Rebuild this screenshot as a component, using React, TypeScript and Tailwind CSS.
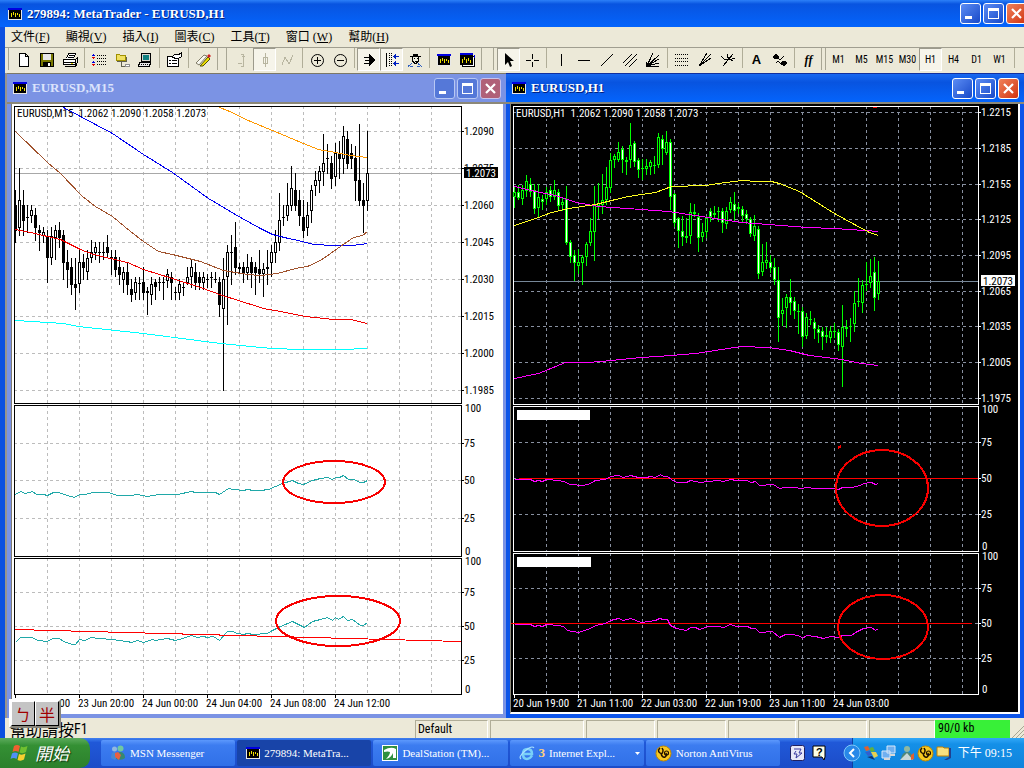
import { ReactNode } from "react";

// high, low, body top, body bottom, filled (1) or hollow (0)
type TCandle = [number, number, number, number, number];
type TPoint = [number, number];

const m15Candles: TCandle[] = [
    [270, 430, 315, 392, 1], [205, 407, 300, 383, 0], [270, 407, 315, 362, 1], [315, 398, 352, 352, 1], [315, 368, 330, 347, 0],
    [325, 423, 345, 384, 1], [375, 453, 390, 400, 1], [380, 430, 396, 407, 0], [390, 548, 407, 473, 1], [380, 495, 407, 473, 0],
    [375, 480, 390, 414, 0], [365, 443, 390, 413, 1], [390, 540, 405, 488, 1], [450, 563, 486, 510, 1], [473, 585, 502, 556, 1],
    [475, 630, 553, 563, 1], [450, 578, 486, 553, 0], [463, 540, 486, 504, 1], [450, 540, 473, 517, 0], [420, 488, 456, 473, 0],
    [426, 480, 441, 458, 0], [426, 488, 457, 457, 1], [426, 480, 457, 457, 1], [405, 475, 441, 459, 1], [450, 525, 471, 471, 1],
    [450, 530, 471, 510, 1], [471, 555, 501, 526, 1], [500, 578, 516, 540, 0], [490, 585, 516, 555, 1], [537, 607, 567, 584, 1],
    [530, 600, 546, 578, 0], [530, 600, 548, 548, 1], [500, 600, 546, 578, 1], [560, 645, 573, 578, 1], [530, 615, 553, 584, 0],
    [537, 600, 547, 562, 1], [530, 572, 547, 547, 1], [530, 600, 547, 547, 1], [507, 563, 522, 543, 0], [516, 600, 530, 549, 1],
    [560, 600, 577, 577, 1], [537, 600, 553, 578, 0], [545, 587, 562, 562, 1], [500, 555, 531, 548, 0], [480, 563, 501, 532, 0],
    [490, 570, 516, 548, 1], [516, 570, 531, 548, 1], [516, 570, 531, 548, 0], [522, 563, 538, 538, 1], [516, 563, 531, 531, 1],
    [516, 548, 538, 538, 1], [531, 650, 547, 614, 1], [475, 873, 538, 628, 0], [435, 675, 456, 532, 0], [405, 555, 457, 457, 1],
    [366, 525, 441, 504, 1], [490, 520, 501, 507, 0], [486, 548, 501, 518, 1], [463, 540, 501, 518, 0], [470, 563, 486, 518, 1],
    [486, 585, 501, 518, 1], [450, 548, 507, 522, 1], [490, 590, 507, 522, 0], [450, 555, 501, 508, 0], [435, 532, 456, 488, 0],
    [390, 488, 426, 458, 0], [280, 452, 360, 428, 0], [315, 378, 352, 352, 1], [250, 362, 315, 347, 0], [198, 332, 264, 318, 0],
    [218, 332, 270, 318, 1], [270, 378, 300, 347, 1], [300, 413, 351, 392, 1], [307, 407, 345, 383, 0], [255, 368, 270, 332, 0],
    [212, 287, 240, 257, 0], [198, 280, 213, 242, 0], [102, 258, 190, 215, 0], [132, 222, 175, 175, 1], [168, 267, 190, 236, 1],
    [130, 258, 158, 230, 0], [122, 236, 158, 177, 1], [78, 222, 108, 177, 0], [93, 207, 117, 192, 1], [132, 207, 160, 177, 1],
    [138, 303, 175, 242, 1], [72, 318, 240, 303, 1], [250, 400, 300, 318, 1], [93, 333, 219, 302, 0],
];

const h1Candles: TCandle[] = [
    [262, 323, 277, 292, 0], [255, 300, 277, 293, 1], [255, 315, 270, 298, 0], [226, 292, 243, 272, 0], [235, 292, 253, 277, 1],
    [253, 342, 270, 328, 1], [253, 350, 292, 323, 0], [285, 330, 297, 307, 1], [262, 315, 277, 298, 0], [258, 307, 270, 292, 1],
    [240, 300, 270, 290, 0], [268, 332, 277, 318, 1], [292, 332, 307, 314, 0], [258, 436, 297, 428, 1], [420, 488, 427, 470, 1],
    [450, 543, 466, 490, 1], [447, 522, 487, 497, 0], [466, 555, 472, 490, 0], [427, 497, 433, 470, 0], [355, 438, 393, 430, 0],
    [258, 482, 315, 395, 0], [250, 357, 308, 318, 0], [222, 342, 300, 314, 0], [200, 315, 262, 300, 0], [160, 280, 181, 265, 0],
    [163, 203, 169, 181, 0], [127, 187, 157, 180, 0], [138, 218, 148, 180, 1], [172, 225, 181, 185, 0], [69, 203, 136, 181, 0],
    [124, 200, 130, 185, 1], [175, 233, 181, 209, 1], [178, 240, 203, 203, 1], [178, 225, 199, 206, 0], [180, 225, 187, 200, 0],
    [168, 222, 195, 195, 1], [99, 203, 112, 194, 0], [105, 195, 118, 148, 1], [93, 165, 127, 160, 0], [118, 330, 127, 292, 1],
    [280, 380, 283, 368, 1], [350, 443, 355, 394, 1], [348, 438, 394, 412, 1], [355, 428, 409, 415, 0], [310, 432, 335, 407, 0],
    [312, 350, 337, 343, 0], [338, 456, 350, 415, 1], [370, 425, 397, 412, 0], [347, 413, 353, 395, 0], [325, 367, 334, 350, 1],
    [318, 358, 338, 346, 0], [320, 367, 333, 333, 1], [325, 398, 334, 368, 1], [320, 387, 332, 373, 0], [292, 340, 307, 330, 0],
    [277, 362, 313, 332, 1], [308, 343, 322, 328, 0], [317, 367, 328, 347, 1], [330, 372, 343, 358, 1], [350, 412, 358, 403, 1],
    [345, 423, 378, 407, 0], [378, 537, 387, 523, 1], [432, 527, 485, 517, 0], [427, 508, 481, 490, 0], [466, 520, 487, 503, 1],
    [473, 555, 502, 540, 1], [502, 725, 541, 653, 1], [595, 677, 630, 643, 0], [583, 683, 592, 625, 0], [537, 645, 592, 610, 1],
    [590, 657, 603, 632, 1], [613, 702, 632, 637, 0], [622, 742, 632, 710, 1], [640, 717, 652, 707, 0], [633, 675, 658, 658, 1],
    [655, 717, 667, 688, 1], [675, 730, 687, 700, 1], [680, 750, 693, 710, 1], [680, 728, 706, 710, 0], [678, 728, 693, 715, 0],
    [670, 713, 693, 697, 0], [687, 752, 697, 735, 1], [615, 860, 680, 740, 0], [660, 710, 680, 688, 1], [655, 725, 678, 678, 1],
    [573, 695, 610, 673, 0], [535, 620, 604, 604, 1], [540, 638, 555, 610, 0], [487, 573, 552, 552, 1], [477, 563, 528, 548, 0],
    [472, 633, 517, 593, 1], [483, 600, 543, 583, 0],
];

const m15Averages: { color: string; points: TPoint[] }[] = [
    { color: "#ff9800", points: [[219, 107], [227, 110], [250, 121], [272, 130], [303, 143], [318, 149], [335, 152], [350, 155], [367, 157]] },
    { color: "#0000f0", points: [[63, 107], [112, 133], [143, 154], [172, 172], [208, 198], [240, 217], [260, 228], [272, 234], [288, 238], [298, 240], [313, 244], [333, 245], [352, 245], [367, 243]] },
    { color: "#a0522d", points: [[15, 131], [47, 162], [60, 173], [82, 196], [95, 206], [112, 216], [130, 231], [143, 241], [158, 251], [172, 254], [200, 261], [223, 270], [247, 274], [260, 275], [277, 273], [295, 268], [307, 266], [320, 260], [340, 246], [353, 237], [362, 235], [367, 231]] },
    { color: "#f00000", points: [[15, 229], [30, 232], [60, 239], [80, 249], [93, 254], [127, 262], [143, 269], [172, 278], [200, 287], [222, 295], [238, 300], [263, 308], [280, 311], [305, 316], [333, 319], [350, 319], [367, 323]] },
    { color: "#00ffff", points: [[15, 320], [63, 323], [78, 326], [143, 333], [220, 343], [260, 347], [273, 348], [300, 349], [340, 349], [367, 348]] },
];

const h1Averages: { color: string; points: TPoint[] }[] = [
    { color: "#ff00ff", points: [[19, 257], [80, 272], [140, 285], [205, 305], [270, 317], [400, 327], [480, 332], [560, 346], [600, 352], [700, 367], [780, 373], [858, 377], [898, 381], [978, 384], [1068, 390], [1110, 394]] },
    { color: "#ff00ff", points: [[19, 835], [90, 818], [170, 786], [240, 786], [310, 779], [400, 770], [490, 764], [560, 758], [640, 748], [700, 737], [780, 740], [843, 751], [903, 765], [998, 777], [1058, 790], [1110, 796]] },
    { color: "#ffff20", points: [[19, 376], [90, 352], [130, 337], [180, 324], [260, 311], [310, 299], [360, 288], [400, 283], [440, 275], [490, 257], [590, 256], [630, 249], [700, 241], [750, 243], [788, 244], [813, 250], [873, 272], [978, 340], [1038, 373], [1083, 397], [1110, 406]] },
];

const m15Rsi: TPoint[] = [[46, 283], [60, 273], [75, 278], [95, 274], [108, 281], [130, 281], [142, 286], [160, 277], [175, 277], [200, 285], [222, 290], [238, 283], [255, 283], [275, 277], [325, 277], [350, 284], [390, 286], [410, 282], [440, 287], [475, 281], [505, 281], [530, 283], [573, 273], [585, 277], [645, 277], [658, 283], [683, 264], [700, 266], [730, 271], [742, 268], [760, 271], [780, 271], [803, 267], [845, 250], [875, 241], [895, 249], [910, 253], [937, 239], [960, 235], [982, 231], [995, 237], [1005, 232], [1018, 232], [1030, 226], [1045, 236], [1060, 236], [1080, 247], [1090, 247], [1101, 239]];
const m15Fast: TPoint[] = [[46, 725], [60, 712], [95, 712], [110, 719], [142, 722], [155, 714], [178, 714], [190, 722], [217, 731], [225, 731], [238, 718], [252, 721], [273, 711], [290, 713], [340, 716], [355, 720], [380, 722], [392, 727], [410, 720], [430, 725], [455, 717], [465, 720], [500, 715], [525, 721], [545, 715], [573, 706], [590, 712], [610, 709], [620, 712], [640, 709], [658, 721], [680, 694], [695, 694], [710, 700], [730, 703], [742, 700], [760, 703], [800, 700], [815, 691], [840, 677], [875, 664], [912, 681], [937, 664], [960, 658], [982, 652], [995, 660], [1005, 652], [1015, 656], [1030, 649], [1042, 660], [1055, 658], [1080, 676], [1090, 676], [1101, 666]];
const h1Rsi: TPoint[] = [[19, 238], [65, 238], [78, 242], [90, 239], [103, 242], [115, 238], [150, 240], [165, 243], [185, 253], [225, 254], [245, 248], [260, 239], [290, 237], [305, 229], [330, 226], [345, 230], [365, 226], [390, 232], [415, 232], [427, 229], [440, 232], [455, 223], [465, 227], [477, 227], [490, 238], [505, 245], [535, 247], [547, 241], [575, 247], [600, 244], [630, 240], [645, 243], [667, 238], [685, 241], [715, 241], [728, 246], [740, 244], [752, 256], [795, 253], [812, 265], [830, 260], [855, 260], [880, 265], [895, 262], [920, 265], [980, 265], [990, 268], [1003, 262], [1030, 262], [1055, 255], [1065, 250], [1088, 247], [1100, 253], [1110, 250]];
const h1Fast: TPoint[] = [[19, 673], [65, 673], [78, 679], [90, 675], [103, 677], [115, 673], [150, 675], [165, 678], [178, 689], [210, 695], [245, 683], [260, 674], [290, 670], [305, 660], [330, 655], [345, 659], [367, 655], [400, 665], [440, 661], [453, 653], [465, 658], [477, 656], [487, 675], [505, 683], [533, 689], [547, 680], [560, 680], [573, 688], [600, 679], [630, 677], [645, 682], [667, 673], [685, 677], [717, 679], [728, 685], [740, 684], [752, 697], [792, 694], [812, 710], [830, 703], [855, 703], [875, 708], [883, 713], [895, 706], [920, 709], [945, 713], [965, 709], [990, 711], [1003, 706], [1030, 706], [1040, 696], [1065, 685], [1088, 682], [1100, 691], [1110, 685]];

const range = (start: number, step: number, count: number) => Array.from({ length: count }, (_, i) => start + i * step);

// series are stored in thirds of a unit, shifted by the pane's origin
const toPoints = (points: TPoint[], dx = 0, dy = 0, k = 1) =>
    points.map(([x, y]) => `${dx + Math.round(x / k) + 0.5},${dy + Math.round(y / k) + 0.5}`).join(" ");

const Candles = ({ data, start, line, fill, empty }: { data: TCandle[]; start: number; line: string; fill: string; empty: string }) => (
    <g>
        {data.map(([high, low, top, bottom, filled], i) => {
            const x = start + i * 4;
            const y = (v: number) => 100 + Math.round(v / 3);
            return (
                <g key={i}>
                    <rect x={x} y={y(high)} width={1} height={y(low) - y(high)} fill={line} />
                    {y(bottom) - y(top) < 2 ? (
                        <rect x={x - 1} y={y(top)} width={3} height={1} fill={line} />
                    ) : (
                        <>
                            <rect x={x - 1} y={y(top)} width={3} height={y(bottom) - y(top)} fill={line} />
                            <rect x={x} y={y(top) + 1} width={1} height={Math.max(0, y(bottom) - y(top) - 2)} fill={filled ? fill : empty} />
                        </>
                    )}
                </g>
            );
        })}
    </g>
);

type TPane = { top: number; bottom: number; rows: { y: number; label: string }[]; ends?: boolean };

const Panes = ({ panes, left, right, columns, ink, grid }: { panes: TPane[]; left: number; right: number; columns: number[]; ink: string; grid: string }) => (
    <g>
        {panes.map((pane) => (
            <g key={pane.top}>
                {columns.map((x) => (
                    <line key={x} x1={x + 0.5} x2={x + 0.5} y1={pane.top} y2={pane.bottom} stroke={grid} strokeDasharray="3 3" />
                ))}
                {pane.rows.map(({ y, label }) => (
                    <g key={y}>
                        <line x1={left} x2={right} y1={y + 0.5} y2={y + 0.5} stroke={grid} strokeDasharray="3 3" />
                        <line x1={right} x2={right + 3} y1={y + 0.5} y2={y + 0.5} stroke={ink} />
                        <text x={right + 3} y={y + 4} fill={ink}>{label}</text>
                    </g>
                ))}
                {pane.ends && (
                    <>
                        <text x={right + 4} y={pane.top + 7} fill={ink}>100</text>
                        <text x={right + 4} y={pane.bottom - 1} fill={ink}>0</text>
                    </>
                )}
                <rect x={left + 0.5} y={pane.top + 0.5} width={right - left} height={pane.bottom - pane.top} fill="none" stroke={ink} />
            </g>
        ))}
    </g>
);

const TimeAxis = ({ start, labels, ink }: { start: number; labels: string[]; ink: string }) => (
    <g>
        {labels.map((label, i) => (
            <g key={label}>
                <line x1={start + i * 64 + 0.5} x2={start + i * 64 + 0.5} y1={694} y2={698} stroke={ink} />
                <text x={start + i * 64 - 1} y={707} fill={ink}>{label}</text>
            </g>
        ))}
    </g>
);

const chartText = "block w-full h-auto font-['Roboto_Condensed','Liberation_Sans_Narrow',sans-serif] text-[11px]";

const M15Chart = () => (
    <svg className={chartText} viewBox="12 104 491 610" shapeRendering="crispEdges" role="img" aria-label="EURUSD,M15">
        <rect x={12} y={104} width={491} height={610} fill="#ffffff" />
        <Panes
            left={14} right={461} ink="#000000" grid="#bcbcbc" columns={range(47, 32, 13)}
            panes={[
                { top: 106, bottom: 403, rows: [131, 168, 205, 242, 279, 316, 353, 390].map((y, i) => ({ y, label: (1.209 - i * 0.0015).toFixed(4) })) },
                { top: 405, bottom: 556, ends: true, rows: [{ y: 443, label: "75" }, { y: 480, label: "50" }, { y: 518, label: "25" }] },
                { top: 558, bottom: 694, ends: true, rows: [{ y: 592, label: "75" }, { y: 626, label: "50" }, { y: 660, label: "25" }] },
            ]}
        />
        <line x1={15} x2={461} y1={173.5} y2={173.5} stroke="#a8a8a8" />
        <Candles data={m15Candles} start={15} line="#000000" fill="#000000" empty="#ffffff" />
        {m15Averages.map((line) => (
            <polyline key={line.color} points={toPoints(line.points)} fill="none" stroke={line.color} />
        ))}
        <polyline points={toPoints(m15Rsi, 0, 400, 3)} fill="none" stroke="#20a8a8" />
        <polyline points={toPoints(m15Fast, 0, 400, 3)} fill="none" stroke="#20a8a8" />
        <line x1={15} x2={461} y1={629.5} y2={641.5} stroke="#ff0000" />
        <g fill="none" stroke="#f80000" strokeWidth={2}>
            <ellipse cx={334} cy={482} rx={51} ry={21} />
            <ellipse cx={338} cy={621} rx={62} ry={25} />
        </g>
        <rect x={464} y={167} width={34} height={11} fill="#000000" />
        <text x={466} y={177} fill="#ffffff">1.2073</text>
        <text x={17} y={117} className="whitespace-pre">{"EURUSD,M15  1.2062 1.2090 1.2058 1.2073"}</text>
        <TimeAxis start={15} ink="#000000" labels={["23 Jun 16:00", "23 Jun 20:00", "24 Jun 00:00", "24 Jun 04:00", "24 Jun 08:00", "24 Jun 12:00"]} />
    </svg>
);

const H1Chart = () => (
    <svg className={chartText} viewBox="511 104 507 608" shapeRendering="crispEdges" role="img" aria-label="EURUSD,H1">
        <rect x={511} y={104} width={507} height={608} fill="#000000" />
        <Panes
            left={513} right={978} ink="#ffffff" grid="#8890a0" columns={range(546, 32, 14)}
            panes={[
                { top: 106, bottom: 404, rows: [112, 148, 184, 219, 255, 291, 326, 362, 398].map((y, i) => ({ y, label: (1.2215 - i * 0.003).toFixed(4) })) },
                { top: 406, bottom: 551, ends: true, rows: [{ y: 442, label: "75" }, { y: 478, label: "50" }, { y: 514, label: "25" }] },
                { top: 553, bottom: 694, ends: true, rows: [{ y: 588, label: "75" }, { y: 623, label: "50" }, { y: 658, label: "25" }] },
            ]}
        />
        <line x1={514} x2={978} y1={281.5} y2={281.5} stroke="#778899" />
        <Candles data={h1Candles} start={514} line="#00ff00" fill="#ffffff" empty="#000000" />
        {h1Averages.map((line, i) => (
            <polyline key={i} points={toPoints(line.points, 508, 100, 3)} fill="none" stroke={line.color} />
        ))}
        <rect x={519} y={478} width={459} height={1} fill="#ff0000" />
        <rect x={511} y={623} width={461} height={1} fill="#ff0000" />
        <polyline points={toPoints(h1Rsi, 508, 400, 3)} fill="none" stroke="#ff00ff" />
        <polyline points={toPoints(h1Fast, 508, 400, 3)} fill="none" stroke="#ff00ff" />
        <path d="M838 448l3-2" stroke="#f80000" strokeWidth={2} />
        <path d="M873 107.500h4" stroke="#f80000" />
        <g fill="none" stroke="#f80000" strokeWidth={2}>
            <ellipse cx={882} cy={488} rx={46} ry={38} />
            <ellipse cx={883} cy={627} rx={45} ry={32} />
        </g>
        <rect x={517} y={410} width={73} height={10} fill="#ffffff" />
        <rect x={517} y={557} width={74} height={10} fill="#ffffff" />
        <rect x={981} y={275} width={34} height={11} fill="#ffffff" />
        <text x={983} y={285} fill="#000000">1.2073</text>
        <rect x={516} y={108} width={184} height={11} fill="#000000" />
        <text x={516} y={117} fill="#ffffff" className="whitespace-pre">{"EURUSD,H1  1.2062 1.2090 1.2058 1.2073"}</text>
        <TimeAxis start={514} ink="#ffffff" labels={["20 Jun 19:00", "21 Jun 11:00", "22 Jun 03:00", "22 Jun 19:00", "23 Jun 11:00", "24 Jun 03:00"]} />
    </svg>
);

const AppIcon = () => (
    <svg width="14" height="12" viewBox="0 0 14 12" shapeRendering="crispEdges" className="shrink-0">
        <path d="M0 0h14v12H0z" fill="#e8e8e8" />
        <path d="M0 0h14v2H0z" fill="#0000e0" />
        <path d="M1 2h12v9H1z" fill="#000" />
        <path d="M3 5h1v4H3zM5 4h1v3H5zM7 5h1v4H7zM9 5h1v2H9zM11 6h1v3h-1z" fill="#f0e000" />
    </svg>
);

const WindowButtons = ({ inactive }: { inactive?: boolean }) => {
    const blue = inactive
        ? "h-[21px] w-[21px] rounded-[3px] border border-[#b8c8f4] bg-[#5578d8]"
        : "h-[21px] w-[21px] rounded-[3px] border border-white bg-linear-to-br from-[#5c8cf4] to-[#1848c8]";
    const red = inactive
        ? "h-[21px] w-[21px] rounded-[3px] border border-[#c8c4ec] bg-[#b06078]"
        : "h-[21px] w-[21px] rounded-[3px] border border-white bg-linear-to-br from-[#f08058] to-[#d03008]";
    return (
        <div className="flex shrink-0 gap-[2px]">
            <button type="button" aria-label="Minimize" className={blue}>
                <svg viewBox="0 0 19 19" shapeRendering="crispEdges"><path d="M4 12h7v3H4z" fill="#fff" /></svg>
            </button>
            <button type="button" aria-label="Maximize" className={blue}>
                <svg viewBox="0 0 19 19" shapeRendering="crispEdges"><path d="M4 4h11v11H4zM5 7v7h9V7z" fill="#fff" fillRule="evenodd" /></svg>
            </button>
            <button type="button" aria-label="Close" className={red}>
                <svg viewBox="0 0 19 19"><path d="M5 5l9 9M14 5l-9 9" stroke="#fff" strokeWidth="2.2" /></svg>
            </button>
        </div>
    );
};

const Tool = ({ label, pressed, children }: { label: string; pressed?: boolean; children: ReactNode }) => (
    <button
        type="button"
        aria-label={label}
        className={`flex h-[23px] w-[23px] shrink-0 items-center justify-center ${pressed ? "border border-t-[#9c9a8c] border-l-[#9c9a8c] border-r-white border-b-white bg-[#f6f4ea]" : ""}`}
    >
        {children}
    </button>
);

const Ico = ({ children, color = "#000" }: { children: ReactNode; color?: string }) => (
    <svg width="16" height="16" viewBox="0 0 16 16" fill="none" stroke={color} shapeRendering="crispEdges" className="shrink-0">{children}</svg>
);

const Sep = () => (
    <div className="flex w-[6px] shrink-0 justify-center"><div className="h-5 w-px bg-[#b0ad98]" /></div>
);

const Grip = ({ className }: { className: string }) => (
    <div className={`flex h-[22px] shrink-0 justify-between ${className}`}>
        <div className="w-px bg-[#a8a694]" />
        <div className="w-px bg-[#a8a694]" />
    </div>
);

const menu = [["文件", "F"], ["顯視", "V"], ["插入", "I"], ["圖表", "C"], ["工具", "T"], ["窗口 ", "W"], ["幫助", "H"]];
const periods = ["M1", "M5", "M15", "M30", "H1", "H4", "D1", "W1"];

const Toolbar = () => (
    <div className="flex h-[26px] items-start overflow-hidden border-t border-[#a09e90] pl-[3px]">
        <div className="mr-[3px] h-[22px] w-px shrink-0 bg-[#a8a694]" />
        <Tool label="New"><Ico><path d="M3.500 1.500h6l3 3v10h-9zM9.500 1.500v3h3" fill="#fff" /></Ico></Tool>
        <Tool label="Save"><Ico><path d="M1.500 1.500h13v13h-13z" fill="#787800" /><path d="M4 2h8v6H4z" fill="#e8e8e8" stroke="none" /><path d="M4 10h8v5H4z" fill="#000" stroke="none" /><path d="M9 11h2v3H9z" fill="#fff" stroke="none" /></Ico></Tool>
        <Tool label="Print"><Ico><path d="M4.500 6.500l2-5h7l-2 5M1.500 7.500h12v5h-12z" fill="#fff" /><path d="M13.500 7.500l2-2v5l-2 2M3 14.500h10l2-2M7 3.500h5M6 5.500h5M2 10.500h11" /><path d="M9 11h2v1H9z" fill="#e0d000" stroke="none" /></Ico></Tool>
        <Sep />
        <Tool label="Market watch"><Ico><path d="M6 3.500h10M6 6.500h10M6 9.500h10M6 12.500h10" strokeDasharray="1 1" /><g stroke="none"><path d="M2 2h1v1h1v1H1V3h1zM2 9h1v1h1v1H1v-1h1z" fill="#00d" /><path d="M1 5h3v1H3v1H2V6H1zM1 12h3v1H3v1H2v-1H1z" fill="#d00" /></g></Ico></Tool>
        <Tool label="Navigator"><Ico><path d="M2.500 2.500h3l1 1h5v5h-9z" fill="#f0e060" stroke="#a09000" /><path d="M3 9.500h9v-5M7.500 10v4h4" stroke="#606050" /><path d="M11 12h4v2h-4z" fill="#fff" stroke="#909090" /></Ico></Tool>
        <Tool label="Terminal"><Ico><path d="M4.500 1.500h9v8h-9z" fill="#d8d8d0" /><path d="M6 3h6v5H6z" fill="#108080" stroke="none" /><path d="M2.500 10.500h11l-1 4h-11z" fill="#e8e8e8" /><path d="M4 12.500h8" strokeDasharray="1 1" /></Ico></Tool>
        <Sep />
        <Tool label="Properties"><Ico><path d="M1.500 4.500h11v10h-11z" fill="#fff" /><path d="M3 8.500h2M6 8.500h5M3 11.500h2M6 11.500h5" /><path d="M6 5l3-3 3 1 3-2v4l-4 2z" fill="#fff" /></Ico></Tool>
        <Sep />
        <Tool label="Ruler"><Ico><g shapeRendering="auto"><path d="M1 11l8-8 3 1-8 9z" fill="#f8f8f0" stroke="#807c68" /><path d="M5 14l8-9 2 2-7 7z" fill="#f0e000" stroke="#505000" /><path d="M12 4l2-2 2 2-2 2z" fill="#d02020" stroke="none" /></g></Ico></Tool>
        <Grip className="mx-[3px] w-[10px]" />
        <Tool label="Bar chart"><Ico color="#b8b5a0"><path d="M7 2h2v12H7M4 11.500h4M8 4.500h3" /></Ico></Tool>
        <Tool label="Candlesticks" pressed><Ico color="#b8b5a0"><path d="M8.500 1v14M6.500 5.500h4v6h-4z" /></Ico></Tool>
        <Tool label="Line chart"><Ico color="#b8b5a0"><path d="M2 13l3-8 4 7 4-9" /></Ico></Tool>
        <Sep />
        <Tool label="Zoom in"><Ico><g shapeRendering="auto"><circle cx="8.500" cy="8.500" r="6" /></g><path d="M5 8.500h7M8.500 5v7" /></Ico></Tool>
        <Tool label="Zoom out"><Ico><g shapeRendering="auto"><circle cx="8.500" cy="8.500" r="6" /></g><path d="M5 8.500h7" /></Ico></Tool>
        <Sep />
        <Tool label="Auto scroll" pressed><Ico><path d="M8 2l6 6-6 6z" fill="#000" /><path d="M3 5.500h5M4 8.500h5M3 11.500h5" /></Ico></Tool>
        <Tool label="Chart shift" pressed><Ico><path d="M2.500 1v14" /><path d="M5.500 1v14M7.500 1v14" strokeDasharray="1 1" /><path d="M10 4.500h5M10 11.500h5" stroke="#0020c0" /><path d="M9 4.500l3-3v6zM9 11.500l3-3v6z" fill="#0020c0" stroke="none" /></Ico></Tool>
        <Tool label="Expert"><Ico><path d="M5 4h6v7H5z" fill="#f0f0e0" stroke="none" /><path d="M3 4.500h11" /><path d="M6 2h5v2H6z" fill="#000" stroke="none" /><path d="M5.500 5v4l2 2h2l2-2V5M7 6.500h1M10 6.500h1M8 9.500h2" /><path d="M1 14.500l4-3M15 14.500l-4-3M3 14.500h3M10 14.500h3" stroke="#3060c0" /></Ico></Tool>
        <Sep />
        <Tool label="New chart"><AppIcon /></Tool>
        <Tool label="Charts"><Ico><path d="M3.500 4.500h12v10h-12z" fill="#fff" /><path d="M15 3h1v3h-1z" fill="#00d" stroke="none" /><path d="M1 2h13v11H1z" fill="#000" stroke="none" /><path d="M1 1h13v2H1z" fill="#00d" stroke="none" /><path d="M3.500 7v4M5.500 5v3M7.500 7v4M9.500 6v3M11.500 8v3" stroke="#f0e000" /></Ico></Tool>
        <Grip className="mx-[3px] w-[13px]" />
        <Tool label="Cursor" pressed><Ico><g shapeRendering="auto"><path d="M4 1v12l3-3 2 5 2-1-2-5h4z" fill="#000" stroke="none" /></g></Ico></Tool>
        <Tool label="Crosshair"><Ico><path d="M2 8.500h5M10 8.500h5M8.500 2v5M8.500 10v5" /></Ico></Tool>
        <Sep />
        <Tool label="Vertical line"><Ico><path d="M8.500 2v12" /></Ico></Tool>
        <Tool label="Horizontal line"><Ico><path d="M2 8.500h12" /></Ico></Tool>
        <Tool label="Trend line"><Ico><path d="M2 14L14 2" /></Ico></Tool>
        <Tool label="Channel"><Ico><path d="M1 11l9-9M3 14L15 2M7 15l8-8" /></Ico></Tool>
        <Tool label="Fan"><Ico><path d="M2 14L8 1M2 14L14 3M2 14l12-7M2 14l12-3M2 14h12" /><path d="M1 15v-5l5 5z" fill="#000" stroke="none" /></Ico></Tool>
        <Sep />
        <Tool label="Fibonacci"><Ico><path d="M1 2.500h14M1 6.500h14M1 9.500h14M1 13.500h14" strokeDasharray="1 1" /></Ico></Tool>
        <Tool label="Fibonacci fan"><Ico><path d="M2 14L10 1M2 14L14 2M2 14l12-8" /></Ico></Tool>
        <Tool label="Fibonacci arcs"><Ico><path d="M3 14L13 2M1 4q3 4 6 4t8-2M7 2q0 5 6 7" /></Ico></Tool>
        <Sep />
        <Tool label="Text"><span className="font-['Liberation_Sans'] text-[13px] font-bold">A</span></Tool>
        <Tool label="Arrows"><Ico><path d="M1 5l3-3 3 3-3 2zM9 11l3-2 3 2-3 3z" fill="#000" /><path d="M6 6l2 2 4-4M4 11l2-2 4 4" /></Ico></Tool>
        <Sep />
        <Tool label="Indicators"><span className="font-['Liberation_Serif'] text-[12px] font-bold italic">ff</span></Tool>
        <Grip className="mx-px w-[5px]" />
        {periods.map((period) => (
            <Tool key={period} label={period} pressed={period === "H1"}>
                <span className="font-['Roboto_Condensed','Liberation_Sans_Narrow',sans-serif] text-[10px]">{period}</span>
            </Tool>
        ))}
        <Sep />
    </div>
);

const WindowsFlag = () => (
    <svg width="20" height="18" viewBox="0 0 20 18" className="shrink-0">
        <path d="M4 2q3-2 6 0L8.500 8q-3-2-6 0z" fill="#f06030" />
        <path d="M11 2.500q3 1.500 6.500-.5L16 8q-3 2-6.500.500z" fill="#70c030" />
        <path d="M2 9.500q3-2 6 0L6.500 15q-3-2-6 0z" fill="#5090f8" />
        <path d="M9 10q3 1.500 6.500-.5L14 15.500q-3 2-6.500.5z" fill="#f8d030" />
    </svg>
);

const MsnIcon = () => (
    <svg width="16" height="16" viewBox="0 0 16 16" className="shrink-0">
        <circle cx="4.500" cy="4" r="2.500" fill="#90b8e0" /><path d="M1 13q0-7 4-6l3 4-3 4z" fill="#4888d0" />
        <circle cx="10.500" cy="3.500" r="3" fill="#70c8a0" /><path d="M6 14q1-8 5-7 4 1 4 6-3 3-9 1z" fill="#388870" />
        <path d="M5 8l3-1 3 3-2 5-4-3z" fill="#e86040" />
    </svg>
);

const DealIcon = () => (
    <svg width="16" height="16" viewBox="0 0 16 16" className="shrink-0">
        <path d="M0 0h16v16H0z" fill="#fff" />
        <path d="M1 1h14v14H1z" fill="#309040" />
        <path d="M2 5q7-4 12-1v9h-3V8q-2 5-7 6 4-4 4-7-2-1-6 0z" fill="#fff" />
    </svg>
);

const ExplorerIcon = () => (
    <svg width="16" height="16" viewBox="0 0 16 16" fill="none" className="shrink-0">
        <path d="M13 10.500q-2 3.500-5 3.500-4 0-4-5 0-5 4.500-5T13 9H5" stroke="#78d0f8" strokeWidth="2.500" />
        <path d="M2 14q-3-2 4-8t9-3" stroke="#a8e0ff" strokeWidth="1.200" />
    </svg>
);

const NortonIcon = () => (
    <svg width="17" height="17" viewBox="0 0 17 17" fill="none" className="shrink-0">
        <circle cx="8.500" cy="8.500" r="7.500" fill="#f8c820" stroke="#c08800" />
        <path d="M5 3q-3 3 0 5t3-3L7 3M6 8q1 5 4 4 2-1 1-4" stroke="#201000" strokeWidth="1.500" />
        <circle cx="11.500" cy="8" r="2" stroke="#201000" strokeWidth="1.200" />
    </svg>
);

const tasks = [
    { icon: <MsnIcon />, label: "MSN Messenger" },
    { icon: <AppIcon />, label: "279894: MetaTra...", active: true },
    { icon: <DealIcon />, label: "DealStation (TM)..." },
    { icon: <ExplorerIcon />, label: "Internet Expl...", count: "3" },
    { icon: <NortonIcon />, label: "Norton AntiVirus" },
];

const Taskbar = () => (
    <footer className="flex h-[30px] bg-linear-to-b from-[#4080f0] via-[#2058d8] via-15% to-[#1c4cc8] font-['Liberation_Serif','Noto_Sans_CJK_TC',serif] text-[11px] text-white">
        <button type="button" className="mr-[11px] flex w-[90px] shrink-0 items-center gap-[5px] rounded-r-[10px] bg-linear-to-b from-[#5cac5c] via-[#349034] via-25% to-[#2c802c] pl-[10px]">
            <WindowsFlag />
            <span className="font-['Noto_Sans_CJK_TC',sans-serif] text-[17px] leading-5 italic [text-shadow:1px_1px_1px_#103810]">開始</span>
        </button>
        <nav className="flex min-w-0 flex-1 gap-[2px] py-[2px]">
            {tasks.map((task) => (
                <button
                    key={task.label}
                    type="button"
                    className={`flex min-w-0 flex-1 items-center gap-[4px] overflow-hidden rounded-[2px] pl-[9px] whitespace-nowrap ${task.active ? "bg-[#1844a8]" : "bg-linear-to-b from-[#5c98fc] via-[#3c7cf0] via-20% to-[#3070e8]"}`}
                >
                    {task.icon}
                    {task.count && <b className="text-[13px] text-[#ffd080]">{task.count}</b>}
                    <span>{task.label}</span>
                    {task.count && (
                        <svg width="5" height="3" viewBox="0 0 5 3" className="mr-1 ml-auto shrink-0"><path d="M0 0h5L2.500 3z" fill="#fff" /></svg>
                    )}
                </button>
            ))}
        </nav>
        <div className="flex w-[72px] shrink-0 items-center gap-[7px] pl-[10px]">
            <svg width="15" height="16" viewBox="0 0 15 16"><rect x=".5" y=".5" width="14" height="15" rx="2" fill="#e8e8f8" stroke="#202060" /><path d="M4 4h7L9 8h3l-6 5 1-4H4l2-3" fill="none" stroke="#3838a0" /></svg>
            <svg width="14" height="16" viewBox="0 0 14 16"><path d="M1 1h12v11l-1 3-2-3H1z" fill="#ffffe8" stroke="#000" /><text x="4" y="11" fontSize="11" fontWeight="bold" fontFamily="Liberation Sans">?</text></svg>
        </div>
        <div className="flex w-[172px] shrink-0 items-center gap-[2px] border-l border-[#1040a0] bg-linear-to-b from-[#30a8f8] via-[#1490e8] via-20% to-[#1084dc]">
            <button type="button" aria-label="Show hidden icons" className="-ml-[10px] shrink-0">
                <svg width="18" height="18" viewBox="0 0 18 18"><circle cx="9" cy="9" r="8" fill="#2888e8" stroke="#80c8f8" /><path d="M11 5L7 9l4 4" fill="none" stroke="#fff" strokeWidth="2" /></svg>
            </button>
            <svg width="16" height="16" viewBox="0 0 16 16" className="shrink-0"><path d="M1 2l4-1 2 4-4 1z" fill="#e06030" /><path d="M6 3l4-1 2 4-4 1z" fill="#60b040" /><path d="M2 7l5-1 2 4-4 1z" fill="#3060d0" /><path d="M8 7l5 0 2 4-4 2z" fill="#e8d050" /><path d="M4 12l5-1 3 4z" fill="#103070" /></svg>
            <svg width="16" height="16" viewBox="0 0 16 16" className="shrink-0"><path d="M6 1h8v7H6zM1 6h8v7H1z" fill="#70b0f0" stroke="#d8e8f8" /><path d="M3 14h6M9 10h5" stroke="#d8d8d8" strokeWidth="2" /></svg>
            <svg width="16" height="16" viewBox="0 0 16 16" className="shrink-0"><circle cx="8" cy="4" r="3" fill="#90b8a0" /><path d="M2 14q1-7 6-7t6 7z" fill="#508878" /><path d="M1 15l7-7 6 7z" fill="#c8d8d8" /><path d="M12 10l3-2v6l-3 1z" fill="#e06030" /></svg>
            <NortonIcon />
            <svg width="16" height="16" viewBox="0 0 16 16" className="shrink-0"><path d="M1 2h6l1 1h5v8H1z" fill="#f8e080" stroke="#c08000" /><path d="M13 3h2v10l-4 2H8l5-3z" fill="#204090" /></svg>
            <time className="ml-auto pr-3 text-[12px] whitespace-nowrap">下午 09:15</time>
        </div>
    </footer>
);

const titleFont = "font-['Liberation_Serif','Noto_Sans_CJK_TC',serif] text-[13px] leading-4 font-bold";
const pane = "h-[18px] border-t border-l border-[#b0ad98] border-r border-r-white";

const App = () => {
    return (
        <div className="relative flex min-h-screen flex-col bg-[#0c50e0] text-black">
            <header className={`flex h-[27px] items-center justify-between overflow-hidden bg-linear-to-b from-[#2c80f8] via-[#0854e0] via-15% to-[#0464fc] pl-2 text-white ${titleFont}`}>
                <div className="flex items-center gap-[5px]">
                    <AppIcon />
                    <h1 className="[text-shadow:1px_1px_0_#002080]">279894: MetaTrader - EURUSD,H1</h1>
                </div>
                <div className="-mr-[3px]"><WindowButtons /></div>
            </header>

            <div className="flex flex-1 flex-col pl-[5px]">
                <nav className="flex h-5 items-center gap-4 bg-[#ece9d8] pl-[6px] font-['Liberation_Serif','Noto_Sans_CJK_TC',serif] text-[12px] leading-4">
                    {menu.map(([label, key]) => (
                        <button key={key} type="button" className="whitespace-pre">{label}(<u>{key}</u>)</button>
                    ))}
                </nav>
                <div className="bg-[#ece9d8]">
                    <Toolbar />
                </div>

                {/* Chart windows */}
                <main className="flex">
                    <section className="flex min-w-0 flex-[501] bg-[#7b93e4]">
                        <div className="w-[2px] shrink-0 bg-[#98948c]" />
                        <div className="min-w-0 flex-1">
                            <div className={`flex h-[31px] items-center justify-between border-t border-b-2 border-t-[#7c7868] border-b-[#8c8878] pr-[5px] pl-[6px] text-[#dce4fc] ${titleFont}`}>
                                <div className="flex items-center gap-[5px]">
                                    <AppIcon />
                                    <h2>EURUSD,M15</h2>
                                </div>
                                <WindowButtons inactive />
                            </div>
                            <div className="border-r-3 border-b-4 border-l-4 border-[#7b93e4]">
                                <div className="border-l border-[#807c70]">
                                    <M15Chart />
                                </div>
                            </div>
                        </div>
                    </section>
                    <section className="min-w-0 flex-[518] bg-[#0c54e8]">
                        <div className={`flex h-[31px] items-center justify-between border-t border-b-2 border-t-[#1030a0] border-b-[#8c8878] bg-linear-to-b from-[#1868f0] via-[#0854e0] via-30% to-[#0464fc] pr-[5px] pl-[6px] text-white ${titleFont}`}>
                            <div className="flex items-center gap-[5px]">
                                <AppIcon />
                                <h2 className="[text-shadow:1px_1px_0_#002080]">EURUSD,H1</h2>
                            </div>
                            <WindowButtons />
                        </div>
                        <div className="border-r-4 border-b-4 border-l-4 border-[#0c54e8]">
                            <div className="border-r-2 border-b-2 border-l border-white border-l-[#8c8878]">
                                <H1Chart />
                            </div>
                        </div>
                    </section>
                </main>

                {/* Status bar */}
                <div className="flex h-5 items-start bg-[#ece9d8] pt-[2px]">
                    <p className="flex min-w-0 flex-[405] pl-[5px] font-['Noto_Sans_CJK_TC',sans-serif] text-[16px] leading-[18px] whitespace-nowrap">
                        幫助請按<span className="font-['Roboto_Condensed',sans-serif] text-[14px]">F1</span>
                    </p>
                    <div className="flex min-w-0 flex-[520] gap-[2px] font-['Roboto_Condensed','Liberation_Sans_Narrow',sans-serif] text-[12px] leading-4">
                        <div className={`flex-[70] pl-[2px] ${pane}`}>Default</div>
                        <div className={`flex-[94] ${pane}`} />
                        <div className={`flex-[68] ${pane}`} />
                        <div className={`flex-[68] ${pane}`} />
                        <div className={`flex-[68] ${pane}`} />
                        <div className={`flex-[68] ${pane}`} />
                        <div className={`flex-[65] ${pane}`} />
                    </div>
                    <div className="h-[18px] w-[75px] shrink-0 bg-[#38f038] pl-[3px] font-['Roboto_Condensed','Liberation_Sans_Narrow',sans-serif] text-[12px] leading-4">90/0 kb</div>
                    <svg width="14" height="18" viewBox="0 0 14 18" stroke="#a8a694" className="shrink-0"><path d="M2 18L14 6M6 18l8-8M10 18l4-4" /></svg>
                </div>
            </div>

            {/* Input method bar */}
            <div className="absolute bottom-10 left-[9px] flex border-2 border-t-white border-l-white border-r-[#88867c] border-b-[#88867c] bg-[#d4d0c8] font-['Noto_Sans_CJK_TC',sans-serif] text-[16px] leading-[22px] text-[#a00000]">
                <button type="button" className="h-[25px] w-6 border border-t-white border-l-white border-r-black border-b-black bg-[#c4c4c4]">ㄅ</button>
                <button type="button" className="h-[25px] w-6 border border-t-white border-l-white border-r-black border-b-black bg-[#c4c4c4]">半</button>
            </div>

            <Taskbar />
        </div>
    );
};

export default App;
